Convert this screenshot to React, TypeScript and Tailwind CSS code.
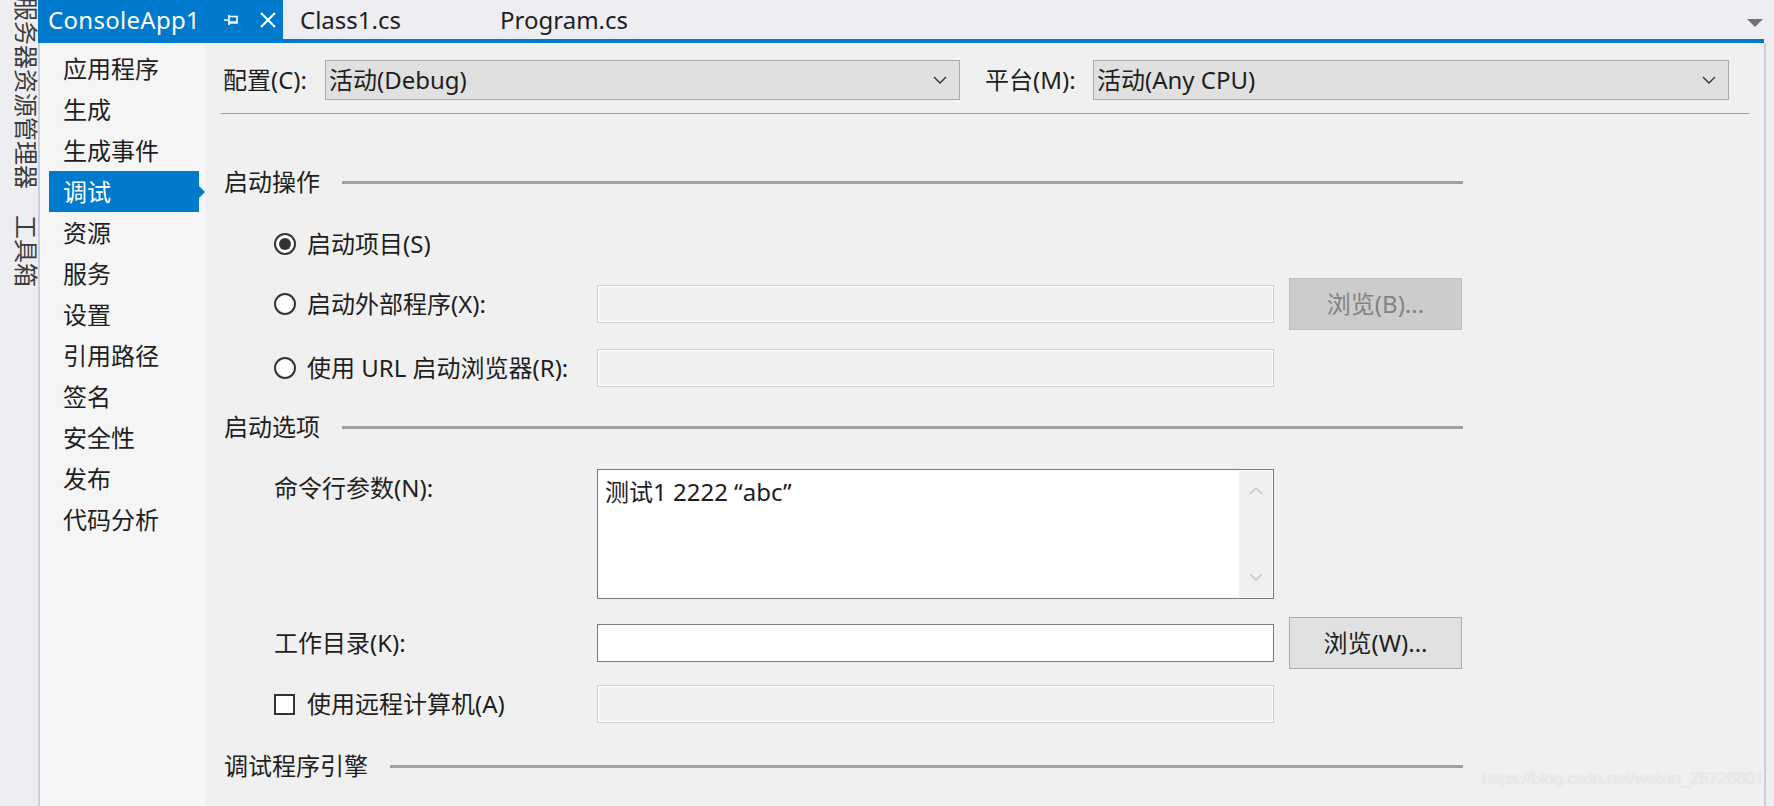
const navItems = ['应用程序', '生成', '生成事件', '调试', '资源', '服务', '设置', '引用路径', '签名', '安全性', '发布', '代码分析'];

function Chevron({ up = false, className = '' }: { up?: boolean; className?: string }) {
  return (
    <svg width="14" height="8" viewBox="0 0 14 8" className={className}>
      <polyline
        points={up ? '1,7 7,1 13,7' : '1,1 7,7 13,1'}
        fill="none"
        stroke="currentColor"
        strokeWidth="1.4"
      />
    </svg>
  );
}

function Dropdown({ value, width }: { value: string; width: string }) {
  return (
    <div className={`${width} h-[40px] bg-[#e0e0e0] border border-[#acacac] flex items-center pl-[3px] pr-[12px]`}>
      <span className="flex-1">{value}</span>
      <Chevron className="text-[#333]" />
    </div>
  );
}

function SectionHeader({ title, className = '' }: { title: string; className?: string }) {
  return (
    <div className={`flex items-center h-[40px] w-[1240px] ${className}`}>
      <span className="pl-px">{title}</span>
      <div className="flex-1 h-[3px] bg-[#a0a0a0] ml-[22px]" />
    </div>
  );
}

function DisabledBox({ className = '' }: { className?: string }) {
  return <div className={`w-[677px] h-[38px] bg-[#f0f0f0] border border-[#cccccc] shadow-[inset_0_0_0_1px_#ffffff] ${className}`} />;
}

function Radio({ checked }: { checked?: boolean }) {
  return (
    <div className="w-[22px] h-[22px] rounded-full border-2 border-[#333] bg-white flex items-center justify-center shrink-0">
      {checked && <div className="w-[12px] h-[12px] rounded-full bg-[#333]" />}
    </div>
  );
}

export default function App() {
  return (
    <div className="w-[1774px] h-[806px] flex bg-[#eeeef2] overflow-hidden relative text-[24px] leading-none text-[#1e1e1e] font-['Noto_Sans','Noto_Sans_CJK_SC',sans-serif]">
      {/* side tool windows */}
      <div className="w-[38px] shrink-0 flex flex-col text-[#3c3c3c] text-[24px]">
        <div className="[writing-mode:vertical-rl] [text-orientation:sideways] leading-[24px] -mt-[3px] -ml-[3px]">服务器资源管理器</div>
        <div className="[writing-mode:vertical-rl] [text-orientation:sideways] leading-[24px] mt-[26px] -ml-[3px]">工具箱</div>
      </div>

      <div className="flex-1 flex flex-col">
        {/* tabs */}
        <div className="h-[39px] flex items-stretch pr-[14px]">
          <div className="w-[245px] bg-[#007acc] text-white flex items-center pl-[10px] pr-[6px]">
            <span className="tracking-[0.3px]">ConsoleApp1</span>
            <svg width="16" height="14" viewBox="0 0 16 14" className="ml-auto">
              <path d="M0 7H5M5 2V12M5 3.5H13V10H5M5 9H13" fill="none" stroke="white" strokeWidth="1.6" />
            </svg>
            <svg width="18" height="18" viewBox="0 0 18 18" className="ml-[19px]">
              <path d="M2 2L16 16M16 2L2 16" stroke="white" strokeWidth="2" />
            </svg>
          </div>
          <div className="w-[217px] flex items-center pl-[17px]">Class1.cs</div>
          <div className="flex items-center">Program.cs</div>
          <div className="ml-auto flex items-center">
            <div className="w-0 h-0 border-x-[8px] border-x-transparent border-t-[8px] border-t-[#717171] mt-[6px] mr-[-3px]" />
          </div>
        </div>
        <div className="h-[4px] bg-[#007acc] mr-[10px]" />

        {/* body */}
        <div className="flex-1 flex border-l-2 border-r-2 border-[#cccedb] mr-[8px]">
          <div className="w-[165px] bg-[#f5f5f5] pt-[5px] shrink-0">
            {navItems.map((item) => (
              <div key={item} className="flex items-center h-[41px]">
                <div
                  className={`w-[150px] h-full ml-[9px] pl-[14px] flex items-center ${
                    item === '调试' ? 'bg-[#007acc] text-white' : ''
                  }`}
                >
                  {item}
                </div>
                {item === '调试' && (
                  <div className="w-0 h-0 border-l-[6px] border-l-[#007acc] border-y-[6px] border-y-transparent" />
                )}
              </div>
            ))}
          </div>

          <div className="flex-1 bg-[#f0f0f0] flex flex-col">
            <div className="flex items-center pt-[17px] pl-[18px]">
              <span className="w-[102px]">配置(C):</span>
              <Dropdown value="活动(Debug)" width="w-[635px]" />
              <span className="ml-[25px] w-[108px]">平台(M):</span>
              <Dropdown value="活动(Any CPU)" width="w-[636px]" />
            </div>
            <div className="mt-[13px] ml-[16px] w-[1528px] h-px bg-[#a0a0a0]" />

            <div className="flex flex-col pl-[18px]">
              <SectionHeader title="启动操作" className="mt-[48px]" />

              <div className="mt-[22px] h-[40px] flex items-center pl-[51px]">
                <Radio checked />
                <span className="ml-[11px]">启动项目(S)</span>
              </div>

              <div className="mt-[14px] h-[52px] flex items-center pl-[51px]">
                <div className="w-[323px] flex items-center">
                  <Radio />
                  <span className="ml-[11px]">启动外部程序(X):</span>
                </div>
                <DisabledBox />
                <div className="ml-[15px] w-[173px] h-[52px] bg-[#cccccc] border border-[#bfbfbf] text-[#838383] flex items-center justify-center">
                  浏览(B)...
                </div>
              </div>

              <div className="mt-[18px] h-[40px] flex items-center pl-[51px]">
                <div className="w-[323px] flex items-center">
                  <Radio />
                  <span className="ml-[11px]">使用 URL 启动浏览器(R):</span>
                </div>
                <DisabledBox />
              </div>

              <SectionHeader title="启动选项" className="mt-[19px]" />

              <div className="mt-[22px] h-[130px] flex pl-[51px]">
                <span className="w-[323px] pt-[7px]">命令行参数(N):</span>
                <div className="w-[677px] h-[130px] bg-white border border-[#7a7a7a] flex">
                  <div className="flex-1 pl-[7px] pt-[10px]">测试1 2222 “abc”</div>
                  <div className="w-[33px] m-px bg-[#f0f0f0] flex flex-col items-center justify-between py-[16px] text-[#c2c2c2]">
                    <Chevron up />
                    <Chevron />
                  </div>
                </div>
              </div>

              <div className="mt-[18px] h-[52px] flex items-center pl-[51px]">
                <span className="w-[323px]">工作目录(K):</span>
                <div className="w-[677px] h-[38px] bg-white border border-[#7a7a7a]" />
                <div className="ml-[15px] w-[173px] h-[52px] bg-[#e1e1e1] border border-[#adadad] flex items-center justify-center">
                  浏览(W)...
                </div>
              </div>

              <div className="mt-[15px] h-[40px] flex items-center pl-[51px]">
                <div className="w-[323px] flex items-center">
                  <div className="w-[21px] h-[21px] border-2 border-[#333] bg-white shrink-0" />
                  <span className="ml-[12px]">使用远程计算机(A)</span>
                </div>
                <DisabledBox />
              </div>

              <SectionHeader title="调试程序引擎" className="mt-[22px]" />
            </div>
          </div>
        </div>
      </div>

      <div className="absolute right-[10px] top-[770px] text-[17px] tracking-[-0.2px] text-[#ececec] font-['Liberation_Sans',sans-serif] [text-shadow:0_0_1px_#cfcfcf]">
        https://blog.csdn.net/weixin_28726801
      </div>
    </div>
  );
}
